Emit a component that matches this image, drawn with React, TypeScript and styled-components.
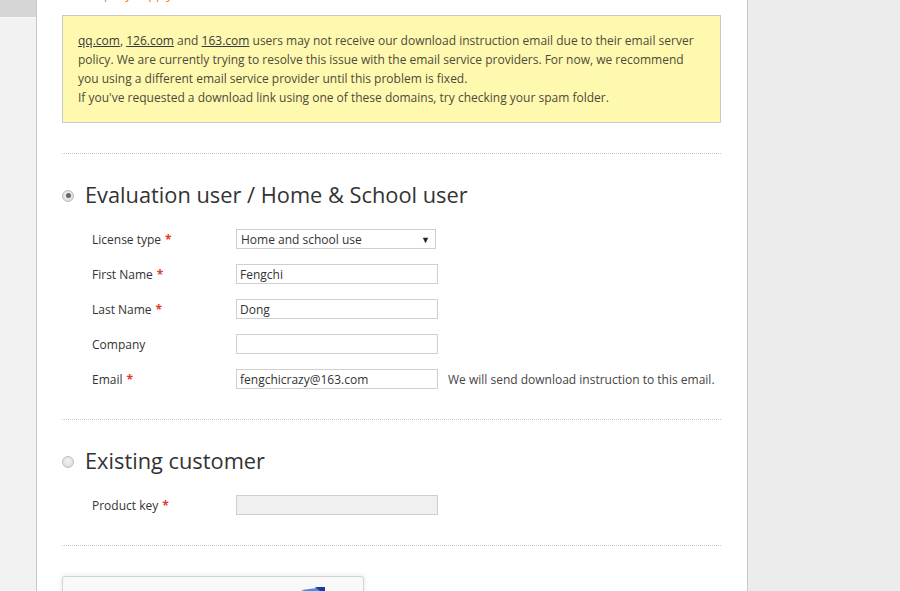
import * as React from 'react';
import styled, { createGlobalStyle } from 'styled-components';

const GlobalStyle = createGlobalStyle`
  html, body {
    margin: 0;
    padding: 0;
    height: 591px;
    overflow: hidden;
    background: #ececec;
  }
  body {
    font-family: "Open Sans", "Noto Sans", Arial, sans-serif;
    color: #333;
  }
`;

const Page = styled.div`
  display: flex;
  height: 591px;
  overflow: hidden;
`;

const Sidebar = styled.aside`
  width: 36px;
  flex: none;
  background: #f2f2f2;
  border-right: 1px solid #c8c8c8;
  display: flex;
  flex-direction: column;
`;

const SideTab = styled.div`
  height: 17px;
  background: #d6d6d6;
  border-bottom: 1px solid #fafafa;
`;

const Main = styled.main`
  width: 711px;
  flex: none;
  background: #fff;
  border-right: 1px solid #c8c8c8;
  padding: 0 26px 0 25px;
  box-sizing: border-box;
`;

const Rest = styled.div`
  flex: 1;
  background: #ececec;
`;

const Prelude = styled.p`
  margin: -14px 0 0 16px;
  font-size: 12px;
  line-height: 18px;
  color: #e67e22;
`;

const Notice = styled.div`
  margin-top: 11px;
  background: #fff9b0;
  border: 1px solid #c9c9c9;
  padding: 15px 15px;
  font-size: 12px;
  line-height: 19px;
  color: #4d4a3a;
`;

const DomainLink = styled.a`
  color: #3a3a3a;
  text-decoration: underline;
`;

const Divider = styled.hr<{ $top: number }>`
  border: none;
  border-top: 1px dotted #c8c8c8;
  margin: ${p => p.$top}px 0 0;
  height: 0;
`;

const Heading = styled.label<{ $top: number }>`
  display: flex;
  align-items: center;
  gap: 11px;
  margin-top: ${p => p.$top}px;
  font-size: 21.8px;
  line-height: 30px;
  color: #333;
`;

const Radio = styled.span<{ $checked?: boolean }>`
  width: 10px;
  height: 10px;
  border-radius: 50%;
  border: 1px solid #bdbdbd;
  background: radial-gradient(circle at 50% 40%, #f4f4f4, #d6d6d6);
  display: grid;
  place-items: center;
  margin-top: 1px;
  &::after {
    content: '';
    width: ${p => (p.$checked ? 5 : 0)}px;
    height: ${p => (p.$checked ? 5 : 0)}px;
    border-radius: 50%;
    background: #666;
  }
`;

const Form = styled.div<{ $top: number }>`
  display: flex;
  flex-direction: column;
  gap: 15px;
  margin-top: ${p => p.$top}px;
  padding-left: 30px;
`;

const Row = styled.div`
  display: grid;
  grid-template-columns: 144px 202px auto;
  align-items: center;
  height: 20px;
`;

const Label = styled.span`
  font-size: 12px;
  color: #333;
`;

const Req = styled.span`
  color: #e2392b;
  font-weight: 700;
  margin-left: 4px;
`;

const Field = styled.div<{ $disabled?: boolean; $width?: number; $pad?: number }>`
  box-sizing: border-box;
  width: ${p => p.$width ?? 202}px;
  height: 20px;
  border: 1px solid #cfcfcf;
  background: ${p => (p.$disabled ? '#f0f0f0' : '#fff')};
  font-size: 12px;
  line-height: 18px;
  padding: 1px ${p => p.$pad ?? 3}px 0;
  color: #333;
  display: flex;
  align-items: center;
  justify-content: space-between;
`;

const Caret = styled.span`
  font-size: 9px;
  color: #222;
  margin-right: 1px;
`;

const Hint = styled.span`
  font-size: 12px;
  color: #444;
  margin-left: 10px;
  white-space: nowrap;
`;

const Captcha = styled.div`
  margin-top: 30px;
  width: 302px;
  height: 80px;
  box-sizing: border-box;
  border: 1px solid #d3d3d3;
  border-radius: 3px;
  background: #f9f9f9;
  box-shadow: 0 0 4px 1px rgba(0, 0, 0, 0.08);
  display: flex;
  justify-content: flex-end;
  align-items: flex-start;
  padding: 9px 34px 0 0;
`;

const rows = [
  { label: 'First Name', req: true, value: 'Fengchi' },
  { label: 'Last Name', req: true, value: 'Dong' },
  { label: 'Company', req: false, value: '' },
];

export default function App() {
  return (
    <>
      <GlobalStyle />
      <Page>
        <Sidebar>
          <SideTab />
        </Sidebar>
        <Main>
          <Prelude>Company / apply</Prelude>
          <Notice>
            <DomainLink>qq.com</DomainLink>, <DomainLink>126.com</DomainLink> and{' '}
            <DomainLink>163.com</DomainLink> users may not receive our download instruction email due to their email server
            policy. We are currently trying to resolve this issue with the email service providers. For now, we recommend
            you using a different email service provider until this problem is fixed.
            <br />
            If you've requested a download link using one of these domains, try checking your spam folder.
          </Notice>
          <Divider $top={30} />
          <Heading $top={26}>
            <Radio $checked />
            Evaluation user / Home &amp; School user
          </Heading>
          <Form $top={19}>
            <Row>
              <Label>
                License type<Req>*</Req>
              </Label>
              <Field $width={200} $pad={4}>
                Home and school use
                <Caret>▼</Caret>
              </Field>
            </Row>
            {rows.map(r => (
              <Row key={r.label}>
                <Label>
                  {r.label}
                  {r.req && <Req>*</Req>}
                </Label>
                <Field>{r.value}</Field>
              </Row>
            ))}
            <Row>
              <Label>
                Email<Req>*</Req>
              </Label>
              <Field>fengchicrazy@163.com</Field>
              <Hint>We will send download instruction to this email.</Hint>
            </Row>
          </Form>
          <Divider $top={30} />
          <Heading $top={26}>
            <Radio />
            Existing customer
          </Heading>
          <Form $top={19}>
            <Row>
              <Label>
                Product key<Req>*</Req>
              </Label>
              <Field $disabled />
            </Row>
          </Form>
          <Divider $top={30} />
          <Captcha>
            <svg width="32" height="32" viewBox="0 0 32 32">
              <path d="M4 4 L20 2 A14 14 0 0 1 30 16 L24 16 A8 8 0 0 0 16 8 Z" fill="#4a90e2" />
              <path d="M18 1 L28 1 L28 9 Z" fill="#1c3aa9" />
            </svg>
          </Captcha>
        </Main>
        <Rest />
      </Page>
    </>
  );
}
